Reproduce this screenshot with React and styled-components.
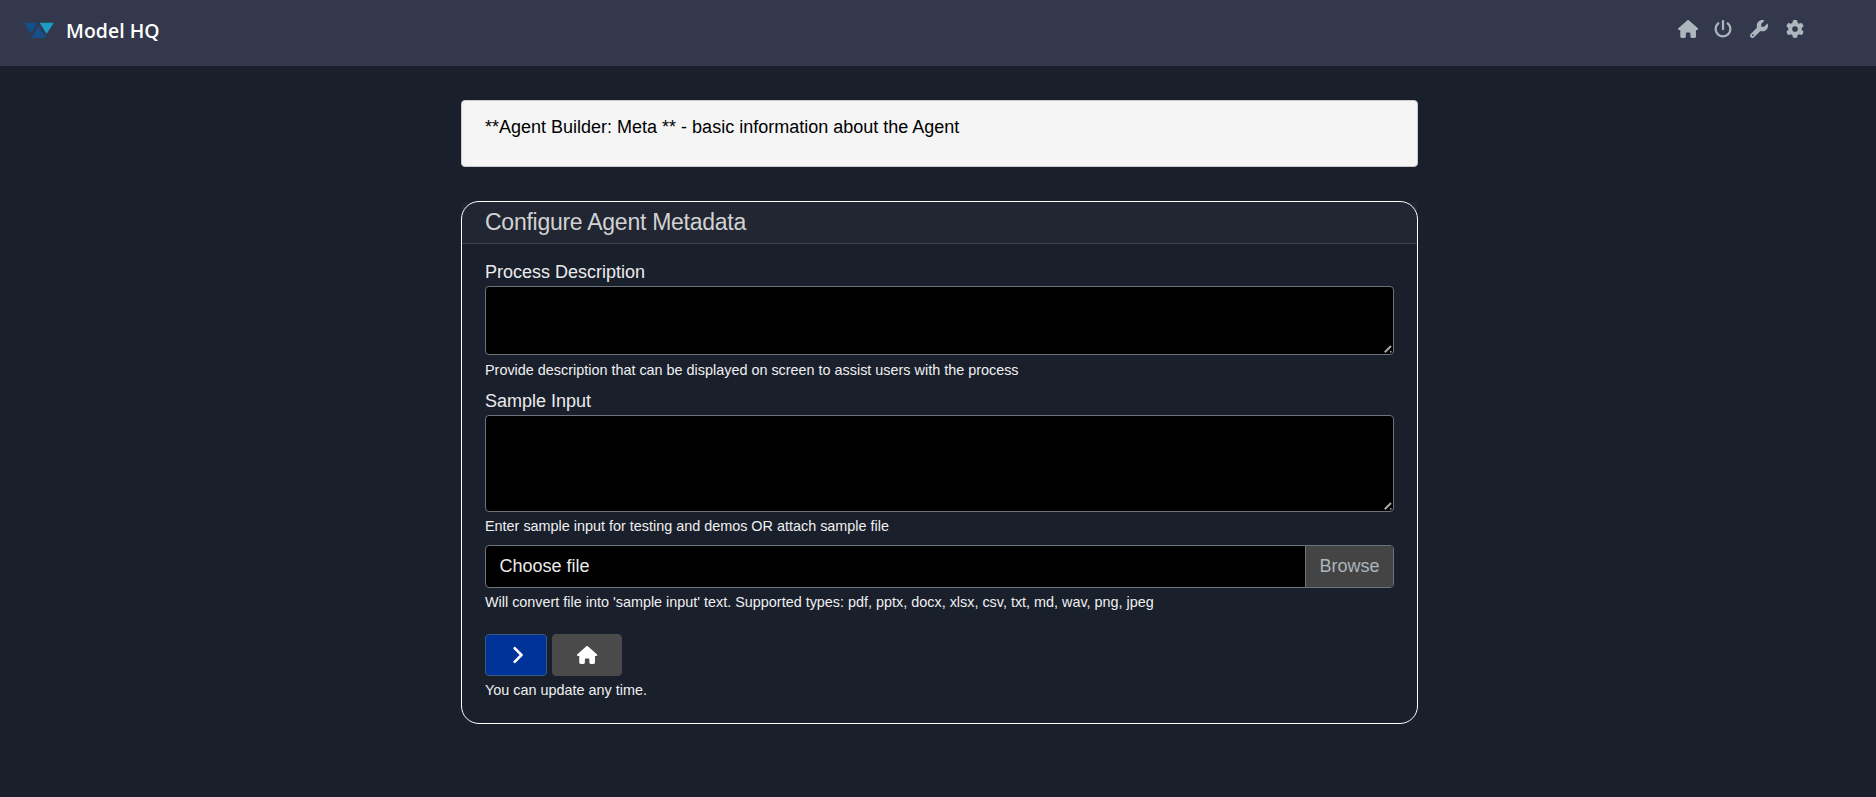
import React from "react";
import styled, { createGlobalStyle } from "styled-components";
import { FaHouse, FaPowerOff, FaWrench, FaGear, FaChevronRight } from "react-icons/fa6";

const GlobalStyle = createGlobalStyle`
  *, *::before, *::after { box-sizing: border-box; }
  html, body { margin: 0; background: #1a1f2c; overflow: hidden; }
  body { font-family: "Liberation Sans", Arial, sans-serif; font-size: 18px; line-height: 27px; color: #ebebeb; }
`;

const Page = styled.div`
  height: 797px;
  display: flex;
  flex-direction: column;
  background: #1a1f2c;
`;

const NavBar = styled.header`
  flex: none;
  height: 66px;
  padding: 14px 72px 0 24px;
  display: flex;
  justify-content: space-between;
  align-items: flex-start;
  background: #33384d;
`;

const Brand = styled.div`
  display: flex;
  align-items: center;
  gap: 12px;
  height: 34px;
  font: 600 19.4px/34px "Open Sans", "Segoe UI", sans-serif;
  letter-spacing: 0.05px;
  color: #fff;
`;

const Logo = styled.svg`
  display: block;
  width: 30px;
  height: 16px;
  margin-top: -2px;
`;

const NavIcons = styled.nav`
  display: flex;
  gap: 18px;
  margin-top: 6px;
  color: #adb5bd;
  font-size: 18px;
  svg { display: block; }
  svg:first-child { width: 20.25px; margin-right: -2px; }
`;

const Main = styled.main`
  width: 957px;
  margin: 34px 0 0 461px;
  display: flex;
  flex-direction: column;
  gap: 34px;
`;

const Banner = styled.div`
  height: 67px;
  padding: 13px 23px;
  background: #f5f5f5;
  border: 1px solid #c9cacd;
  border-radius: 4px;
  color: #000;
`;

const Card = styled.section`
  height: 523px;
  border: 1px solid #fff;
  border-radius: 18px;
`;

const CardHeader = styled.h1`
  margin: 0;
  height: 42px;
  padding: 5px 23px 0;
  font-size: 23px;
  font-weight: 400;
  line-height: 30px;
  letter-spacing: -0.26px;
  color: #d2d2d2;
  background: rgba(255, 255, 255, 0.033);
  border-bottom: 1px solid #3d414c;
  border-radius: 3px 3px 0 0;
`;

const CardBody = styled.form`
  padding: 14px 23px;
  display: flex;
  flex-direction: column;
`;

const Label = styled.label`
  height: 28px;
  padding-top: 1px;
`;

const Field = styled.div`
  position: relative;
`;

const TextArea = styled.textarea`
  display: block;
  width: 100%;
  height: ${(p) => p.$height}px;
  margin: 0;
  background: #000;
  color: #fff;
  border: 1px solid #6c737b;
  border-radius: 4px;
  resize: none;
`;

const Grip = styled.svg`
  position: absolute;
  right: 2px;
  bottom: 2px;
  width: 8px;
  height: 8px;
  pointer-events: none;
`;

const Help = styled.small`
  height: ${(p) => p.$height || 22}px;
  margin-top: 4px;
  font-size: 14.4px;
  line-height: ${(p) => p.$line || 20}px;
  color: #f0f0f0;
`;

const FilePicker = styled.div`
  display: flex;
  height: 43px;
  background: #000;
  border: 1px solid #6c757d;
  border-radius: 4px;
  overflow: hidden;
  line-height: 41px;
`;

const FileName = styled.span`
  flex: 1;
  padding-left: 13.5px;
`;

const BrowseButton = styled.span`
  width: 88px;
  text-align: center;
  background: #444;
  color: #adb5bd;
  border-left: 1px solid #6c757d;
`;

const Actions = styled.div`
  display: flex;
  gap: 5px;
`;

const ActionButton = styled.button`
  display: flex;
  align-items: center;
  justify-content: center;
  width: ${(p) => p.$width}px;
  height: 42px;
  padding: 0;
  background: ${(p) => (p.$primary ? "#003399" : "#4a4a4a")};
  border: 1px solid ${(p) => (p.$primary ? "#375a7f" : "#4a4a4a")};
  border-radius: 4px;
  color: #fff;
  font-size: 18px;
`;

const ChevronGlyph = styled(FaChevronRight)`
  margin-left: 1px;
  stroke: #fff;
  stroke-width: 18;
`;

const HouseGlyph = styled(FaHouse)`
  width: 20.25px;
  margin-left: 1px;
`;

function TextField({ id, height }) {
  return (
    <Field>
      <TextArea id={id} $height={height} />
      <Grip viewBox="0 0 8 8">
        <path d="M0.8 7.2L7 1" stroke="#a9a9a9" strokeWidth="2" fill="none" />
        <rect x="6" y="6" width="1.5" height="1.5" fill="#a9a9a9" />
      </Grip>
    </Field>
  );
}

export default function App() {
  return (
    <Page>
      <GlobalStyle />
      <NavBar>
        <Brand>
          <Logo viewBox="0 0 30 16">
            <path d="M0.3 0.8H14L6.8 12Z" fill="#12508c" />
            <path d="M14.3 4L22.3 15.8H7.5Z" fill="#15508d" />
            <path d="M15.6 0.8H29.8L22.6 12Z" fill="#1b9dc6" />
            <path d="M14.6 0.4L7 12.6M14.9 1.8L23 13.8" stroke="#33384d" strokeWidth="1" fill="none" />
          </Logo>
          Model HQ
        </Brand>
        <NavIcons>
          <FaHouse />
          <FaPowerOff />
          <FaWrench />
          <FaGear />
        </NavIcons>
      </NavBar>
      <Main>
        <Banner>**Agent Builder: Meta ** - basic information about the Agent</Banner>
        <Card>
          <CardHeader>Configure Agent Metadata</CardHeader>
          <CardBody>
            <Label htmlFor="description">Process Description</Label>
            <TextField id="description" height={69} />
            <Help $height={28} $line={22}>Provide description that can be displayed on screen to assist users with the process</Help>
            <Label htmlFor="sample">Sample Input</Label>
            <TextField id="sample" height={97} />
            <Help $height={29}>Enter sample input for testing and demos OR attach sample file</Help>
            <FilePicker>
              <FileName>Choose file</FileName>
              <BrowseButton>Browse</BrowseButton>
            </FilePicker>
            <Help $height={42}>Will convert file into 'sample input' text. Supported types: pdf, pptx, docx, xlsx, csv, txt, md, wav, png, jpeg</Help>
            <Actions>
              <ActionButton type="button" $primary $width={62}><ChevronGlyph /></ActionButton>
              <ActionButton type="button" $width={70}><HouseGlyph /></ActionButton>
            </Actions>
            <Help>You can update any time.</Help>
          </CardBody>
        </Card>
      </Main>
    </Page>
  );
}
